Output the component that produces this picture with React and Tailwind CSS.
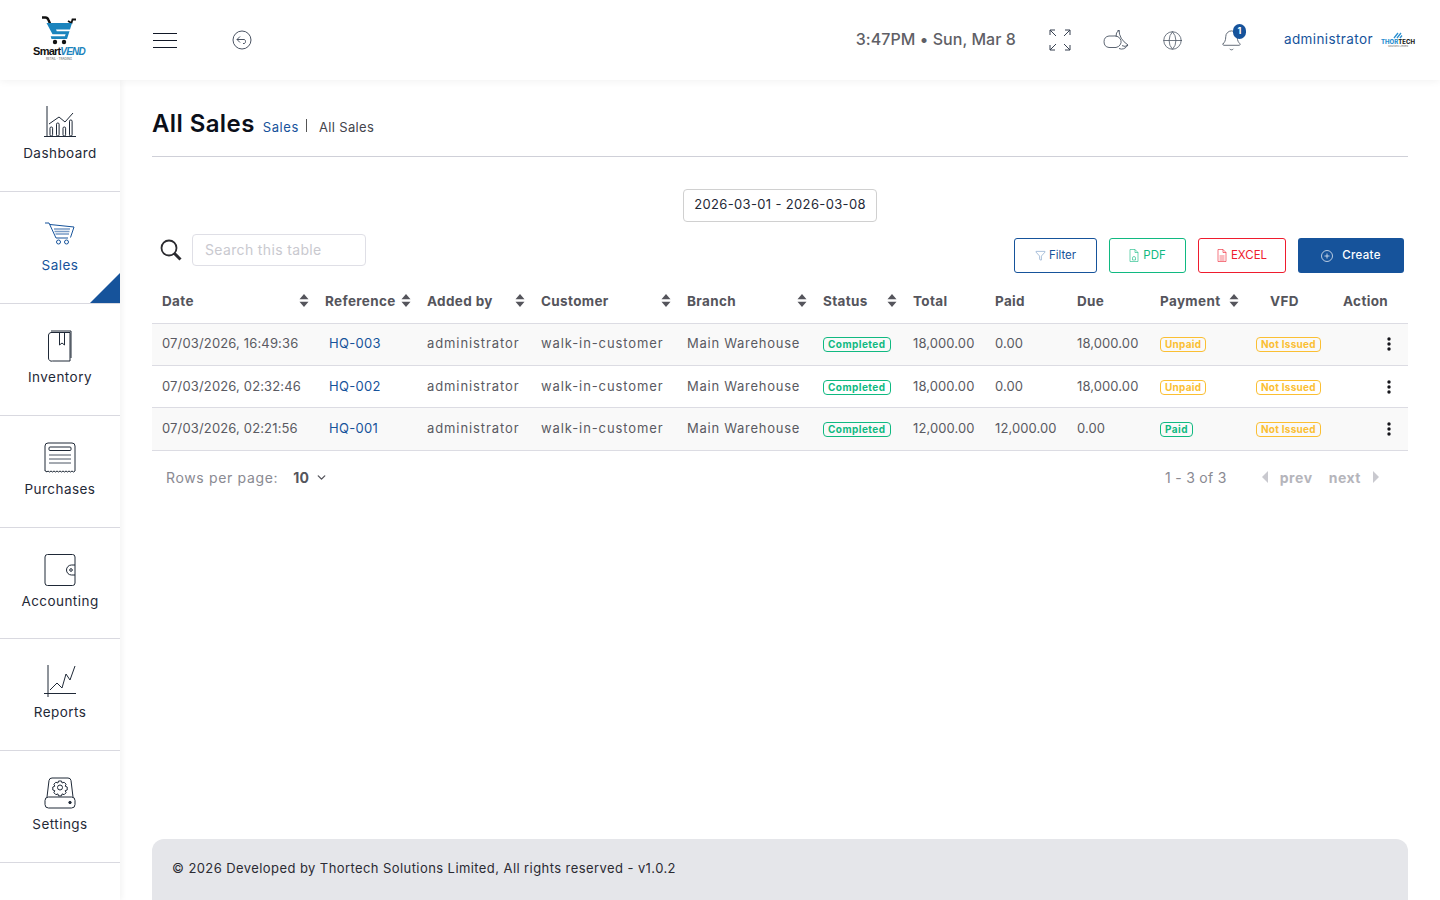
import { Globe, Bell, Funnel, ChevronDown } from "lucide-react";

const rows = [
  { date: "07/03/2026, 16:49:36", ref: "HQ-003", total: "18,000.00", paid: "0.00", due: "18,000.00", pay: "Unpaid" },
  { date: "07/03/2026, 02:32:46", ref: "HQ-002", total: "18,000.00", paid: "0.00", due: "18,000.00", pay: "Unpaid" },
  { date: "07/03/2026, 02:21:56", ref: "HQ-001", total: "12,000.00", paid: "12,000.00", due: "0.00", pay: "Paid" },
];

const DashboardIcon = () => (
  <svg width="32" height="32" viewBox="0 0 32 32" fill="none" stroke="#1f2937" strokeWidth="1">
    <path d="M3 0v31M0 30.5h32" />
    <path d="M5 18l10-7 6 5 8-9" />
    <rect x="6" y="21" width="2.6" height="9" rx="1.2" />
    <rect x="12.5" y="17" width="2.6" height="13" rx="1.2" />
    <rect x="19" y="21" width="2.6" height="9" rx="1.2" />
    <rect x="25.5" y="14" width="2.6" height="16" rx="1.2" />
  </svg>
);

const SalesIcon = () => (
  <svg width="32" height="24" viewBox="0 0 32 24" fill="none" stroke="#16539b" strokeWidth="1">
    <path d="M1 1h4l7 15h12" />
    <path d="M6 2.5l24 2.5-3.5 10.5" />
    <circle cx="14.5" cy="20" r="2" />
    <circle cx="22.5" cy="20" r="2" />
    <path d="M10 7h16M10.500 9.500h15M11.500 12h13.500" stroke="#7a9cc6" strokeWidth="1.600" />
  </svg>
);

const InventoryIcon = () => (
  <svg width="32" height="32" viewBox="0 0 32 32" fill="none" stroke="#1f2937" strokeWidth="1">
    <path d="M7 2.500h19v28.500H8.500A3 3 0 0 1 4.500 28V5A3 3 0 0 1 7 2.500z" />
    <path d="M27 1v27M7 1h20" />
    <path d="M15.500 3v12l2.500-2 2.500 2V3" />
  </svg>
);

const PurchasesIcon = () => (
  <svg width="32" height="32" viewBox="0 0 32 32" fill="none" stroke="#1f2937" strokeWidth="1">
    <path d="M1 29V4a3 3 0 0 1 3-3h24a3 3 0 0 1 3 3v25q-1.500 2-3 0-1.500 2-3 0-1.500 2-3 0-1.500 2-3 0-1.500 2-3 0-1.500 2-3 0-1.500 2-3 0-1.500 2-3 0-1.500 2-3 0-1.500 2-2 0z" />
    <rect x="5" y="5" width="22" height="3.500" rx="1" />
    <path d="M5 13h22M5 17h22M5 21h22" stroke="#4b5563" />
  </svg>
);

const AccountingIcon = () => (
  <svg width="32" height="32" viewBox="0 0 32 32" fill="none" stroke="#1f2937" strokeWidth="1">
    <path d="M31 11V3a2.500 2.500 0 0 0-2.500-2.500h-25A2.500 2.500 0 0 0 1 3v26a2.500 2.500 0 0 0 2.500 2.500h25A2.500 2.500 0 0 0 31 29v-8" />
    <path d="M31 11h-3.500a5 5 0 0 0 0 10H31z" />
    <circle cx="27" cy="16" r="1.300" />
  </svg>
);

const ReportsIcon = () => (
  <svg width="32" height="32" viewBox="0 0 32 32" fill="none" stroke="#1f2937" strokeWidth="1">
    <path d="M4 0v32M0 28.500h32" />
    <path d="M6 25l7-7 5 5 4-14 4 6 5-14" />
  </svg>
);

const SettingsIcon = () => (
  <svg width="32" height="32" viewBox="0 0 32 32" fill="none" stroke="#1f2937" strokeWidth="1">
    <path d="M3 20L5 3.500A3 3 0 0 1 8 1h16a3 3 0 0 1 3 2.500L29 20" />
    <rect x="1" y="20" width="30" height="11" rx="3.500" />
    <circle cx="26" cy="25.500" r="1.200" fill="#1f2937" />
    <circle cx="16" cy="10.500" r="2.500" />
    <path d="M14.500 4h3l.6 2 2-.8 2 2-.9 2 2 .8v3l-2 .7.9 2-2 2-2-.8-.6 2h-3l-.6-2-2 .8-2-2 .9-2-2-.7v-3l2-.8-.9-2 2-2 2 .8z" />
  </svg>
);

const navItems = [
  { label: "Dashboard", icon: DashboardIcon },
  { label: "Sales", icon: SalesIcon, active: true },
  { label: "Inventory", icon: InventoryIcon },
  { label: "Purchases", icon: PurchasesIcon },
  { label: "Accounting", icon: AccountingIcon },
  { label: "Reports", icon: ReportsIcon },
  { label: "Settings", icon: SettingsIcon },
];

const SortIcon = () => (
  <svg width="10" height="13" viewBox="0 0 10 13" fill="#55555c">
    <path d="M5 0l4.500 5.200H.5zM5 13L.5 7.800h9z" />
  </svg>
);

const Logo = () => (
  <div className="flex flex-col items-center -mt-[2px] -ml-[2px]">
    <svg width="36" height="30" viewBox="0 0 36 30">
      <path d="M1 1.500h3.500q2 0 3 2.500l1.500 3.500" fill="none" stroke="#111" strokeWidth="2.400" />
      <path d="M27 5l3.500 2 1-3.500h3.500" fill="none" stroke="#111" strokeWidth="1.800" />
      <path d="M5.500 7h25.500l-2 6.500H15l.8 1.800h12.700L26 23H10.500l-.8-2.800h14.200l.7-1.900H11.500z" fill="#1b84bd" />
      <circle cx="14" cy="26" r="2.200" fill="#111" />
      <circle cx="23" cy="26" r="2.200" fill="#111" />
    </svg>
    <div className="flex items-baseline leading-none">
      <span className="[font-family:'Liberation_Sans',sans-serif] text-[11px] font-bold tracking-[-0.8px] text-[#111]">Smart</span>
      <span className="[font-family:'Liberation_Sans',sans-serif] text-[10px] italic font-bold tracking-[-0.8px] text-[#1b84bd]">VEND</span>
    </div>
    <span className="text-[3px] leading-[5px] text-[#555]">RETAIL · TRADING</span>
  </div>
);

const ThortechLogo = () => (
  <div className="flex flex-col items-center w-[34px]">
    <svg width="10" height="7" viewBox="0 0 10 7" fill="none" stroke="#2a8fd0" strokeWidth="1.300">
      <path d="M1 6l4-5M4 6l4-5M7 6l2-2.500" />
    </svg>
    <div className="text-[6px] leading-[6px] font-extrabold whitespace-nowrap">
      <span className="text-[#2a8fd0]">THOR</span><span className="text-[#222]">TECH</span>
    </div>
    <span className="text-[2.500px] leading-[4px] text-[#666] whitespace-nowrap">Solutions Limited</span>
  </div>
);

const Badge = ({ tone, children }) => {
  const tones = {
    green: "border-[#10b981] text-[#10b981] tracking-[0.45px]",
    yellow: "border-[#fbbf33] text-[#fbbf33] tracking-[0.25px]",
  };
  return (
    <span className={`inline-block border rounded-[4px] px-[4px] text-[10px] leading-[13px] font-bold ${tones[tone]}`}>
      {children}
    </span>
  );
};

const Th = ({ children, sort, extra = "" }) => (
  <th className={`text-left font-bold text-[13.500px] tracking-[0.35px] text-[#55555c] ${extra}`}>
    <div className="flex items-center justify-between pl-[10px] pr-[6px]">
      <span className="whitespace-nowrap">{children}</span>
      {sort && <SortIcon />}
    </div>
  </th>
);

export default function App() {
  return (
    <div className="h-screen flex flex-col overflow-hidden bg-white [font-family:Inter,sans-serif]">
      <header className="h-20 shrink-0 flex items-center bg-white shadow-[0_1px_8px_rgba(0,0,0,0.06)] relative z-10 pr-[25px]">
        <div className="w-[120px] flex justify-center"><Logo /></div>
        <div className="ml-[33px] flex flex-col gap-[6px] w-6">
          <span className="h-px bg-[#111827]" />
          <span className="h-px bg-[#111827]" />
          <span className="h-px bg-[#111827]" />
        </div>
        <svg className="ml-[55px]" width="20" height="20" viewBox="0 0 20 20" fill="none" stroke="#374151" strokeWidth="0.900">
          <circle cx="10" cy="10" r="9" />
          <path d="M8 6.500L5 9.500l3 3M5 9.500h7.500a2.500 2.500 0 0 1 0 4H11" />
        </svg>
        <div className="ml-auto pb-[2px] text-[16px] font-medium tracking-[0.05px] text-[#5f5f66] whitespace-nowrap">3:47PM • Sun, Mar 8</div>
        <svg className="ml-[33px]" width="22" height="22" viewBox="0 0 22 22" fill="none" stroke="#374151" strokeWidth="1">
          <path d="M1 1l6 6M1 1v5M1 1h5M21 1l-6 6M21 1v5M21 1h-5M1 21l6-6M1 21v-5M1 21h5M21 21l-6-6M21 21v-5M21 21h-5" />
        </svg>
        <svg className="ml-[31px]" width="27" height="22" viewBox="0 0 27 22" fill="none" stroke="#4b5563" strokeWidth="0.900">
          <path d="M7 7h4a6.500 5.800 0 0 1 3 11.500H7a5.700 5.800 0 0 1 0-11.500z" />
          <path d="M14 8Q13.500 3.500 17 1 17 10 26 16q-3 2.500-6 .6M17 19.500q5 2.200 9-3.500M15.500 1.500l2 .5" />
        </svg>
        <Globe className="ml-[33px] text-[#4b5563]" size={21} strokeWidth={0.9} />
        <div className="ml-[37px] relative">
          <Bell className="text-[#4b5563]" size={23} strokeWidth={0.9} />
          <span className="absolute -top-[5px] left-[13px] w-[13px] h-[15px] rounded-full bg-[#16539b] text-white text-[9px] font-bold flex items-center justify-center">1</span>
        </div>
        <span className="ml-[41px] pb-px text-[13.500px] tracking-[0.4px] text-[#16539b]">administrator</span>
        <div className="ml-2"><ThortechLogo /></div>
      </header>

      <div className="flex flex-1 min-h-0">
        <aside className="w-[120px] shrink-0 shadow-[2px_0_6px_rgba(0,0,0,0.05)] bg-white">
          {navItems.map(({ label, icon: Icon, active }) => (
            <div key={label} className="relative h-[111.900px] border-b border-[#d9d9e0] flex flex-col items-center pt-[26px]">
              <div className="h-8 flex items-center"><Icon /></div>
              <span className={`mt-[5px] text-[13.500px] tracking-[0.45px] ${active ? "text-[#16539b]" : "text-[#1f2937]"}`}>{label}</span>
              {active && (
                <svg className="absolute right-0 bottom-0" width="30" height="30" viewBox="0 0 30 30">
                  <path d="M30 0v30H0z" fill="#16539b" />
                </svg>
              )}
            </div>
          ))}
        </aside>

        <main className="flex-1 min-w-0 flex flex-col px-8">
          <div className="pt-7 pb-4 border-b border-[#cfd0d8] flex items-baseline h-[77px]">
            <h1 className="text-[24px] leading-8 font-semibold tracking-[0.4px] text-[#0b0f19]">All Sales</h1>
            <span className="ml-2 text-[13px] tracking-[0.6px] text-[#16539b]">Sales</span>
            <span className="ml-[7px] pr-[12px] border-l border-[#555] h-[13px]" />
            <span className="text-[13px] tracking-[0.35px] text-[#44444c]">All Sales</span>
          </div>

          <div className="flex justify-center mt-8">
            <div className="h-[33px] pb-px w-[194px] border border-[#d0d0d0] rounded-[4px] flex items-center justify-center text-[13px] tracking-[0.35px] text-[#1f2937]">2026-03-01 - 2026-03-08</div>
          </div>

          <div className="flex justify-between items-start mt-3 pl-2 pr-1">
            <div className="flex items-center">
              <svg width="22" height="22" viewBox="0 0 22 22" fill="none" stroke="#2b2b30">
                <circle cx="9" cy="9" r="7.500" strokeWidth="1.800" />
                <path d="M14.500 14.500l6 6" strokeWidth="3" />
              </svg>
              <input
                placeholder="Search this table"
                className="ml-[10px] w-[174px] h-8 border border-[#dfdfe6] rounded-[4px] px-3 pb-px text-[14px] tracking-[0.35px] placeholder:text-[#c9c9cf] outline-none"
              />
            </div>
            <div className="flex gap-3 mt-1 text-[11.500px]">
              <button className="h-[35px] w-[83px] border border-[#16539b] rounded-[3px] flex items-center justify-center gap-[3px] text-[#16539b]">
                <Funnel size={11} strokeWidth={0.8} />Filter
              </button>
              <button className="h-[35px] w-[77px] border border-[#10b981] rounded-[3px] flex items-center justify-center gap-[4px] text-[#10b981]">
                <svg width="10" height="13" viewBox="0 0 10 13" fill="none" stroke="#10b981" strokeWidth="0.600">
                  <path d="M1 .5h5l3 3v9H1zM6 .5v3h3M3.500 9a1.500 1.500 0 0 1 3 0v2h-3z" />
                </svg>
                PDF
              </button>
              <button className="h-[35px] w-[88px] border border-[#ef1c2e] rounded-[3px] flex items-center justify-center gap-[4px] text-[#ef1c2e]">
                <svg width="10" height="13" viewBox="0 0 10 13" fill="none" stroke="#ef1c2e" strokeWidth="0.600">
                  <path d="M1 .5h5l3 3v9H1zM6 .5v3h3M2.500 7h5M2.500 9h5M2.500 11h5" />
                </svg>
                EXCEL
              </button>
              <button className="h-[35px] w-[106px] rounded-[3px] bg-[#16539b] text-white flex items-center justify-center gap-[9px] font-medium tracking-[0.3px]">
                <svg width="12" height="12" viewBox="0 0 12 12" fill="none" stroke="#fff" strokeWidth="0.700">
                  <circle cx="6" cy="6" r="5.500" />
                  <path d="M6 3.500v5M3.500 6h5" />
                </svg>
                Create
              </button>
            </div>
          </div>

          <table className="table-fixed w-full mt-[6px] border-collapse">
            <colgroup>
              <col className="w-[163px]" />
              <col className="w-[102px]" />
              <col className="w-[114px]" />
              <col className="w-[146px]" />
              <col className="w-[136px]" />
              <col className="w-[90px]" />
              <col className="w-[82px]" />
              <col className="w-[82px]" />
              <col className="w-[83px]" />
              <col className="w-[96px]" />
              <col className="w-[87px]" />
              <col className="w-[75px]" />
            </colgroup>
            <thead>
              <tr className="h-[44px] border-b border-[#dcdce3]">
                <Th sort>Date</Th>
                <Th sort>Reference</Th>
                <Th sort>Added by</Th>
                <Th sort>Customer</Th>
                <Th sort>Branch</Th>
                <Th sort>Status</Th>
                <Th>Total</Th>
                <Th>Paid</Th>
                <Th>Due</Th>
                <Th sort extra="[&>div]:pr-[7px]">Payment</Th>
                <Th extra="[&>div]:pl-[24px]">VFD</Th>
                <Th>Action</Th>
              </tr>
            </thead>
            <tbody className="text-[13px] text-[#5a5a62]">
              {rows.map((r, i) => (
                <tr key={r.ref} className={`h-[42.400px] border-b border-[#dcdce3] ${i % 2 === 0 ? "bg-[#f9f9f9]" : "bg-white"}`}>
                  <td className="pl-[10px] whitespace-nowrap tracking-[0.15px]">{r.date}</td>
                  <td className="pl-[14px] tracking-[0.3px] text-[#16539b]">{r.ref}</td>
                  <td className="pl-[10px] tracking-[0.9px]">administrator</td>
                  <td className="pl-[10px] tracking-[0.9px] whitespace-nowrap">walk-in-customer</td>
                  <td className="pl-[10px] tracking-[0.73px] whitespace-nowrap">Main Warehouse</td>
                  <td className="pl-[10px]"><Badge tone="green">Completed</Badge></td>
                  <td className="pl-[10px] tracking-[0.1px]">{r.total}</td>
                  <td className="pl-[10px] tracking-[0.1px]">{r.paid}</td>
                  <td className="pl-[10px] tracking-[0.1px]">{r.due}</td>
                  <td className="pl-[10px]"><Badge tone={r.pay === "Paid" ? "green" : "yellow"}>{r.pay}</Badge></td>
                  <td className="pl-[10px]"><Badge tone="yellow">Not Issued</Badge></td>
                  <td className="pr-[17px]">
                    <svg className="ml-auto" width="4" height="14" viewBox="0 0 4 14" fill="#16161c">
                      <circle cx="2" cy="2" r="1.700" />
                      <circle cx="2" cy="7" r="1.700" />
                      <circle cx="2" cy="12" r="1.700" />
                    </svg>
                  </td>
                </tr>
              ))}
            </tbody>
          </table>

          <div className="flex items-center justify-between h-[53px] pl-[14px] pr-[29px] text-[14px] tracking-[0.3px] text-[#8a8a92]">
            <div className="flex items-center">
              <span className="tracking-[0.65px]">Rows per page:</span>
              <span className="ml-[15px] font-bold text-[#55555c]">10</span>
              <ChevronDown className="ml-[6px] text-[#55555c]" size={13} strokeWidth={2.5} />
            </div>
            <div className="flex items-center">
              <span>1 - 3 of 3</span>
              <svg className="ml-[35px]" width="6" height="12" viewBox="0 0 6 12" fill="#c9c9cf"><path d="M6 0v12L0 6z" /></svg>
              <span className="ml-[12px] font-bold tracking-[0.6px] text-[#b5b5bb]">prev</span>
              <span className="ml-4 font-bold tracking-[0.5px] text-[#b5b5bb]">next</span>
              <svg className="ml-[12px]" width="6" height="12" viewBox="0 0 6 12" fill="#c9c9cf"><path d="M0 0v12l6-6z" /></svg>
            </div>
          </div>

          <footer className="mt-auto h-[61px] shrink-0 rounded-t-xl bg-[#e5e6ea] flex items-center pl-5 pb-[2px] text-[13px] tracking-[0.42px] text-[#2b2b33]">
            © 2026 Developed by Thortech Solutions Limited, All rights reserved - v1.0.2
          </footer>
        </main>
      </div>
    </div>
  );
}
